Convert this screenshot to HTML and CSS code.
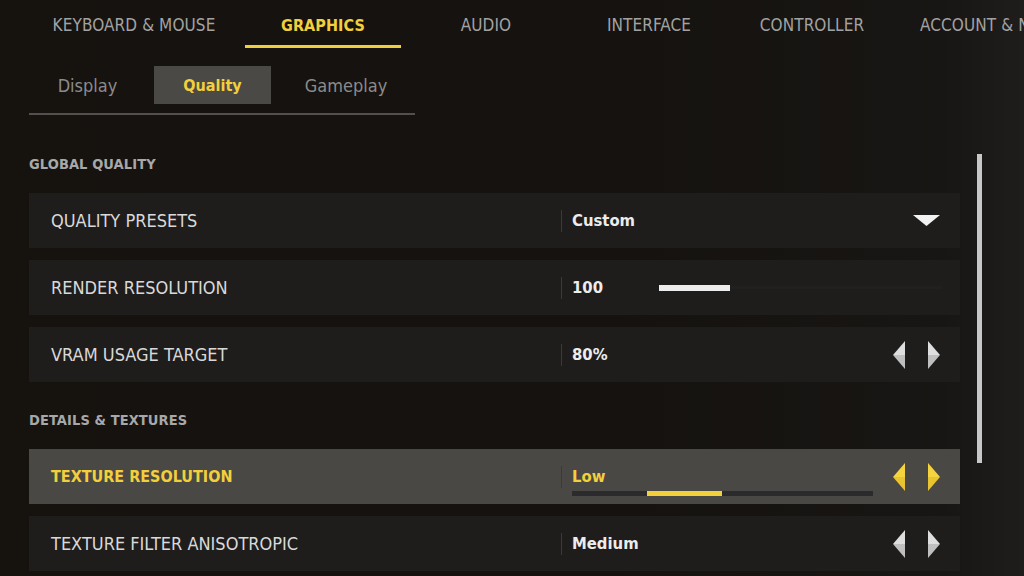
FILE: index.html
```html
<!DOCTYPE html>
<html lang="en">
<head>
<meta charset="utf-8">
<title>Graphics - Quality</title>
<link rel="stylesheet" href="styles.css">
</head>
<body>
<div class="screen">
  <nav class="tabs">
    <div class="tab tab-wide">KEYBOARD &amp; MOUSE</div>
    <div class="tab active">GRAPHICS</div>
    <div class="tab">AUDIO</div>
    <div class="tab">INTERFACE</div>
    <div class="tab">CONTROLLER</div>
    <div class="tab tab-last">ACCOUNT &amp; NETWORK</div>
  </nav>

  <div class="subtabs">
    <div class="subtab">Display</div>
    <div class="subtab active">Quality</div>
    <div class="subtab subtab-wide">Gameplay</div>
  </div>

  <div class="content">
    <div class="list">
      <section class="section">
        <h2 class="section-title">GLOBAL QUALITY</h2>
        <div class="row">
          <div class="label">QUALITY PRESETS</div>
          <div class="value">
            <span class="value-text">Custom</span>
            <svg class="dropdown" width="27" height="11" viewBox="0 0 27 11"><polygon points="0,0 27,0 13.5,11" fill="#f2f2f2"/></svg>
          </div>
        </div>
        <div class="row">
          <div class="label">RENDER RESOLUTION</div>
          <div class="value">
            <span class="value-text value-num">100</span>
            <div class="slider"><div class="slider-fill" style="width:71px"></div></div>
          </div>
        </div>
        <div class="row">
          <div class="label">VRAM USAGE TARGET</div>
          <div class="value">
            <span class="value-text">80%</span>
            <div class="arrows">
              <svg width="12" height="28" viewBox="0 0 12 28"><polygon points="12,0 0,14 12,14" fill="#dedede"/><polygon points="0,14 12,14 12,28" fill="#bfbfbf"/></svg>
              <svg width="12" height="28" viewBox="0 0 12 28"><polygon points="0,0 12,14 0,14" fill="#dedede"/><polygon points="12,14 0,14 0,28" fill="#bfbfbf"/></svg>
            </div>
          </div>
        </div>
      </section>

      <section class="section">
        <h2 class="section-title">DETAILS &amp; TEXTURES</h2>
        <div class="row row-active">
          <div class="label">TEXTURE RESOLUTION</div>
          <div class="value">
            <div class="value-stack">
              <span class="value-text">Low</span>
              <div class="steps"><div class="steps-fill" style="margin-left:75px;width:75px"></div></div>
            </div>
            <div class="arrows">
              <svg width="12" height="28" viewBox="0 0 12 28"><polygon points="12,0 0,14 12,14" fill="#f6d43e"/><polygon points="0,14 12,14 12,28" fill="#e8c430"/></svg>
              <svg width="12" height="28" viewBox="0 0 12 28"><polygon points="0,0 12,14 0,14" fill="#f6d43e"/><polygon points="12,14 0,14 0,28" fill="#e8c430"/></svg>
            </div>
          </div>
        </div>
        <div class="row">
          <div class="label">TEXTURE FILTER ANISOTROPIC</div>
          <div class="value">
            <span class="value-text">Medium</span>
            <div class="arrows">
              <svg width="12" height="28" viewBox="0 0 12 28"><polygon points="12,0 0,14 12,14" fill="#dedede"/><polygon points="0,14 12,14 12,28" fill="#bfbfbf"/></svg>
              <svg width="12" height="28" viewBox="0 0 12 28"><polygon points="0,0 12,14 0,14" fill="#dedede"/><polygon points="12,14 0,14 0,28" fill="#bfbfbf"/></svg>
            </div>
          </div>
        </div>
      </section>
    </div>
    <div class="scroll">
      <div class="scroll-thumb"></div>
    </div>
  </div>
</div>
</body>
</html>
```

FILE: styles.css
```css
* {
  box-sizing: border-box;
}

html, body {
  margin: 0;
  padding: 0;
  width: 1024px;
  height: 576px;
  overflow: hidden;
}

body {
  background: linear-gradient(90deg, #16130f 0%, #15120f 60%, #181614 92%, #1e1d1c 100%);
  font-family: "DejaVu Sans Condensed", "DejaVu Sans", Roboto, sans-serif;
  color: #d9d9d9;
}

.screen {
  display: flex;
  flex-direction: column;
  width: 1024px;
  height: 576px;
}

/* top tabs */
.tabs {
  display: flex;
  gap: 7px;
  padding-left: 30px;
  height: 48px;
  flex-shrink: 0;
  white-space: nowrap;
}

.tab {
  width: 156px;
  flex-shrink: 0;
  height: 48px;
  padding-top: 5px;
  border-bottom: 3px solid transparent;
  display: flex;
  align-items: center;
  justify-content: center;
  font-size: 17px;
  font-weight: 400;
  color: #a2a2a2;
  letter-spacing: 0.1px;
}

.tab-wide {
  width: 208px;
}

.tab-last {
  justify-content: flex-start;
  padding-left: 23px;
  width: 200px;
}

.tab.active {
  color: #f2d03c;
  font-size: 16px;
  font-weight: 700;
  border-bottom-color: #f0cf3c;
}

/* sub tabs */
.subtabs {
  display: flex;
  gap: 8px;
  margin-top: 18px;
  margin-left: 29px;
  width: 386px;
  padding-bottom: 9px;
  border-bottom: 2px solid #52504d;
  flex-shrink: 0;
}

.subtab {
  width: 117px;
  height: 38px;
  display: flex;
  align-items: center;
  justify-content: center;
  font-size: 18px;
  color: #8b8b8b;
}

.subtab-wide {
  width: 134px;
}

.subtab.active {
  background: #4a4946;
  color: #f2d03c;
  font-size: 16px;
  font-weight: 700;
}

/* content */
.content {
  display: flex;
  gap: 17px;
  margin-left: 29px;
}

.list {
  width: 931px;
  display: flex;
  flex-direction: column;
  gap: 28px;
  padding-top: 39px;
}

.section {
  display: flex;
  flex-direction: column;
  gap: 12px;
}

.section-title {
  margin: 0 0 7px 0;
  height: 20px;
  line-height: 20px;
  font-size: 14.5px;
  font-weight: 700;
  color: #a8a8a8;
  letter-spacing: 0.1px;
}

.row {
  height: 55px;
  display: flex;
  align-items: center;
  background: #1f1d1c;
}

.row-active {
  background: #4a4844;
}

.label {
  width: 532px;
  padding-left: 22px;
  font-size: 18px;
  color: #d9d9d9;
}

.row-active .label {
  color: #f2d03c;
  font-size: 16px;
  font-weight: 700;
}

.row-active .value-text {
  color: #f2d03c;
}

.value {
  flex: 1;
  height: 22px;
  display: flex;
  align-items: center;
  padding-left: 10px;
  padding-right: 20px;
  border-left: 1px solid #3c3a38;
}

.value-text {
  font-size: 16.5px;
  font-weight: 700;
  color: #ececec;
}

.value-num {
  width: 87px;
}

.dropdown {
  margin-left: auto;
}

.slider {
  flex: 1;
  height: 3px;
  margin-right: -2px;
  background: #22201e;
  display: flex;
  align-items: center;
}

.slider-fill {
  height: 6px;
  background: #ededed;
}

.arrows {
  margin-left: auto;
  display: flex;
  gap: 23px;
}

.value-stack {
  position: relative;
  flex: 1;
  display: flex;
  align-items: center;
  height: 22px;
}

.steps {
  position: absolute;
  left: 0;
  top: 25px;
  width: 301px;
  height: 5px;
  background: #2b2b2e;
  display: flex;
}

.steps-fill {
  height: 5px;
  background: #f2d03c;
}

/* scrollbar */
.scroll {
  width: 5px;
  padding-top: 39px;
}

.scroll-thumb {
  width: 5px;
  height: 309px;
  background: #c8c8c8;
}
```
